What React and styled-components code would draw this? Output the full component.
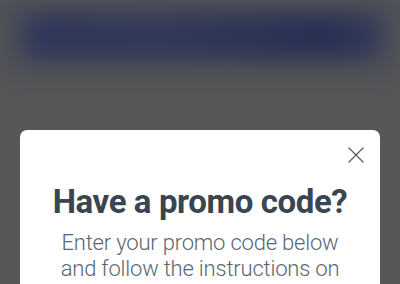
import styled, { createGlobalStyle } from 'styled-components';

const GlobalStyle = createGlobalStyle`
  html, body {
    margin: 0;
    padding: 0;
    background: #575757;
  }
  * {
    box-sizing: border-box;
  }
`;

const Page = styled.div`
  position: relative;
  width: 400px;
  height: 284px;
  overflow: hidden;
  background: #575757;
  font-family: Roboto, 'Liberation Sans', sans-serif;
`;

const Backdrop = styled.div`
  height: 96px;
  padding: 14px 20px 0 24px;
  background: linear-gradient(180deg, #4a4c57 0%, #4c4e57 55%, #575757 100%);
  filter: blur(11px);
`;

const HeaderBar = styled.div`
  height: 46px;
  border-radius: 12px;
  background: linear-gradient(90deg, #30375a 0%, #323858 40%, #283054 85%, #343a58 100%);
`;

const Overlay = styled.div`
  position: absolute;
  inset: 0;
  padding: 130px 20px 0;
`;

const Modal = styled.div`
  background: #ffffff;
  border-radius: 7px;
  padding: 16px 16px 24px;
  display: flex;
  flex-direction: column;
  align-items: center;
  min-height: 200px;
`;

const CloseRow = styled.div`
  align-self: stretch;
  display: flex;
  justify-content: flex-end;
`;

const CloseButton = styled.button`
  width: 17px;
  height: 17px;
  padding: 0;
  border: 0;
  background: none;
  color: #5b5f63;
  display: flex;
  align-items: center;
  justify-content: center;
  cursor: pointer;
`;

const Title = styled.h2`
  margin: 19px 0 0;
  font-size: 33px;
  line-height: 40px;
  font-weight: 700;
  letter-spacing: -0.4px;
  color: #3a4551;
  text-align: center;
  white-space: nowrap;
`;

const Lead = styled.p`
  margin: 8px 0 0;
  font-size: 22px;
  line-height: 26px;
  font-weight: 300;
  letter-spacing: -0.2px;
  color: #5b6670;
  text-align: center;
  white-space: nowrap;
`;

const CloseIcon = () => (
  <svg width='16' height='16' viewBox='0 0 16 16' fill='none'>
    <path d='M1 1 L15 15 M15 1 L1 15' stroke='currentColor' strokeWidth='1.3' strokeLinecap='round' />
  </svg>
);

const App = () => {
  return (
    <>
      <GlobalStyle />
      <Page>
        <Backdrop>
          <HeaderBar />
        </Backdrop>
        <Overlay>
          <Modal role='dialog' aria-labelledby='promo-title'>
            <CloseRow>
              <CloseButton aria-label='Close'>
                <CloseIcon />
              </CloseButton>
            </CloseRow>
            <Title id='promo-title'>Have a promo code?</Title>
            <Lead>
              Enter your promo code below
              <br />
              and follow the instructions on
            </Lead>
          </Modal>
        </Overlay>
      </Page>
    </>
  );
};

export default App;
